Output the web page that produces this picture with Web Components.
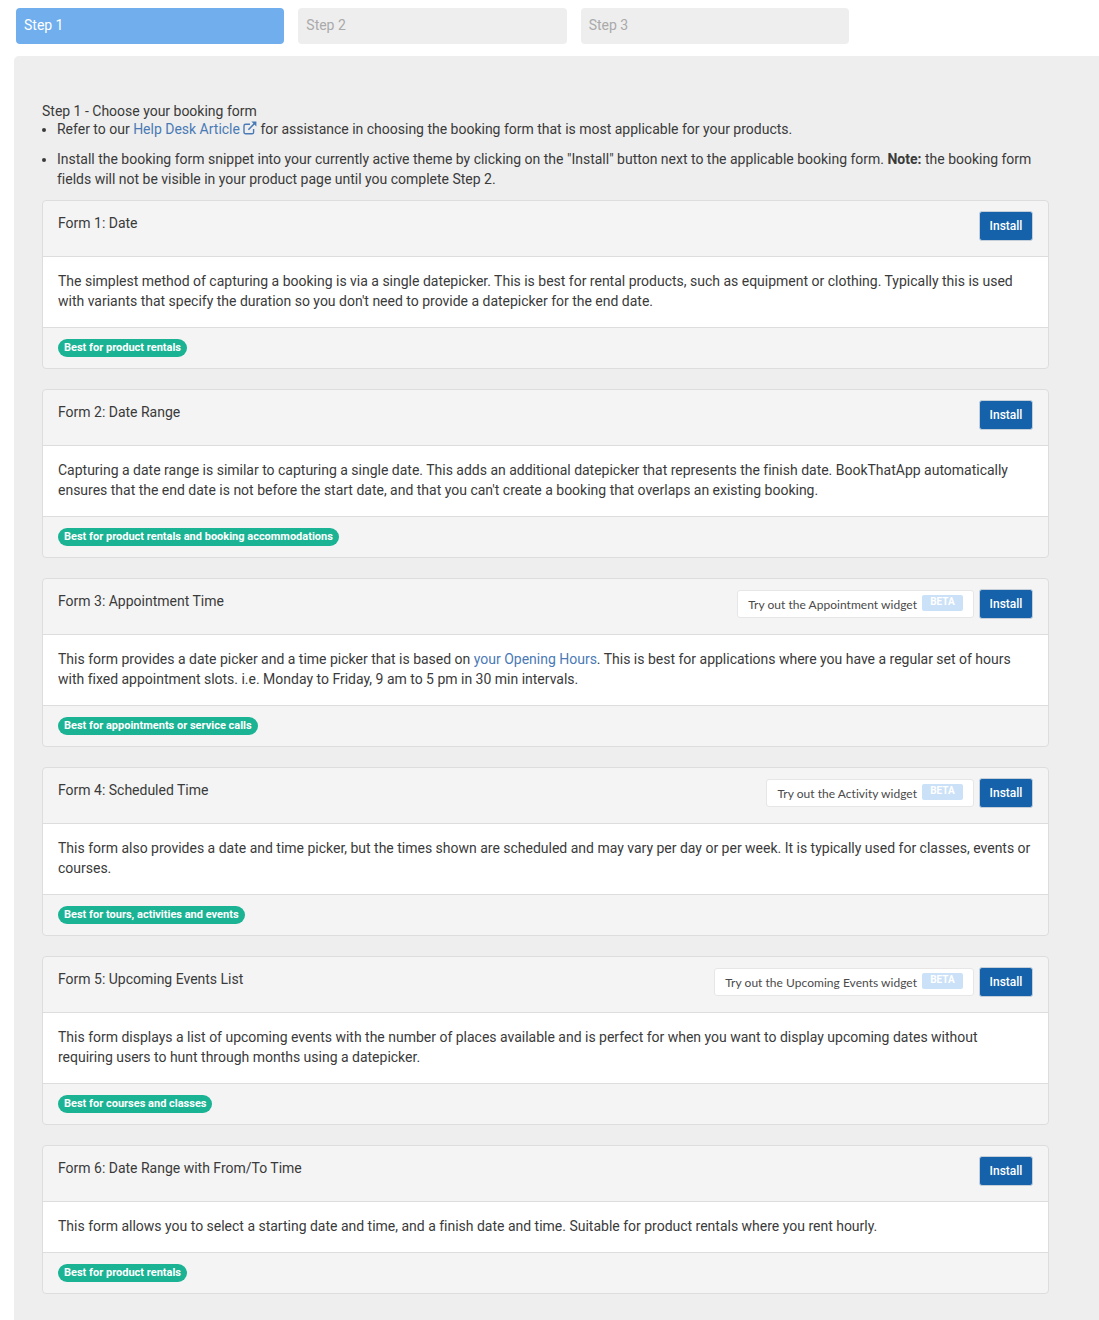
<!DOCTYPE html>
<html lang="en"><head><meta charset="utf-8"><title>Booking forms</title>
<style>
html,body{margin:0;padding:0;background:#fff;font-family:Roboto,"Liberation Sans",sans-serif;font-size:14px;line-height:20px;color:#3a3a3a;letter-spacing:-.007px}
body{height:1320px;overflow:hidden}
</style></head><body>
<wizard-steps><step-tab active>Step 1</step-tab><step-tab>Step 2</step-tab><step-tab>Step 3</step-tab></wizard-steps>
<step-panel>
<div slot="intro">Step 1 - Choose your booking form</div>
<info-list slot="intro">
<info-item>Refer to our <a style="color:#4a7ab5;text-decoration:none" href="#">Help Desk Article<ext-icon></ext-icon></a> for assistance in choosing the booking form that is most applicable for your products.</info-item>
<info-item>Install the booking form snippet into your currently active theme by clicking on the "Install" button next to the applicable booking form. <b>Note:</b> the booking form fields will not be visible in your product page until you complete Step 2.</info-item>
</info-list>
<form-card title="Form 1: Date" tag="Best for product rentals">The simplest method of capturing a booking is via a single datepicker. This is best for rental products, such as equipment or clothing. Typically this is used with variants that specify the duration so you don't need to provide a datepicker for the end date.</form-card>
<form-card title="Form 2: Date Range" tag="Best for product rentals and booking accommodations">Capturing a date range is similar to capturing a single date. This adds an additional datepicker that represents the finish date. BookThatApp automatically ensures that the end date is not before the start date, and that you can't create a booking that overlaps an existing booking.</form-card>
<form-card title="Form 3: Appointment Time" tag="Best for appointments or service calls" widget="Try out the Appointment widget">This form provides a date picker and a time picker that is based on <a style="color:#4a7ab5;text-decoration:none" href="#">your Opening Hours</a>. This is best for applications where you have a regular set of hours with fixed appointment slots. i.e. Monday to Friday, 9 am to 5 pm in 30 min intervals.</form-card>
<form-card title="Form 4: Scheduled Time" tag="Best for tours, activities and events" widget="Try out the Activity widget">This form also provides a date and time picker, but the times shown are scheduled and may vary per day or per week. It is typically used for classes, events or courses.</form-card>
<form-card title="Form 5: Upcoming Events List" tag="Best for courses and classes" widget="Try out the Upcoming Events widget">This form displays a list of upcoming events with the number of places available and is perfect for when you want to display upcoming dates without requiring users to hunt through months using a datepicker.</form-card>
<form-card title="Form 6: Date Range with From/To Time" tag="Best for product rentals" single>This form allows you to select a starting date and time, and a finish date and time. Suitable for product rentals where you rent hourly.</form-card>
</step-panel>
<script>
function def(name,html,init){customElements.define(name,class extends HTMLElement{connectedCallback(){if(this.shadowRoot)return;const r=this.attachShadow({mode:'open'});r.innerHTML=html;if(init)init(this,r);}});}
def('wizard-steps',`<style>:host{display:flex;gap:14px;padding:8px 0 12px 16px;width:833px}</style><slot></slot>`);
def('step-tab',`<style>:host{display:block;flex:1 1 0;height:36px;line-height:35px;padding:0 8px;border-radius:4px;background:#eee;color:#aaa;font-size:14px;box-sizing:border-box}
:host([active]){background:#70aeee;color:#fff}</style><slot></slot>`);
def('step-panel',`<style>:host{display:block;margin-left:14px;background:#eee;border-top-left-radius:5px;padding:45px 50px 40px 28px}
.cards{display:flex;flex-direction:column;gap:20px}
.intro{padding-bottom:1px}</style><div class="intro"><slot name="intro"></slot></div><div class="cards"><slot></slot></div>`);
def('info-list',`<style>:host{display:block;padding-left:15px;margin-top:-2px}</style><slot></slot>`);
def('info-item',`<style>:host{display:list-item;list-style:disc outside;margin-bottom:10px}</style><slot></slot>`);
def('ext-icon',`<style>:host{display:inline-block;width:14px;height:14px;margin:0 0 0 3px;vertical-align:-1px}svg{display:block}</style>
<svg viewBox="0 0 14 14" width="14" height="14" fill="none" stroke="#4a7ab5" stroke-width="1.4"><path d="M10.6 8v3.2c0 .9-.7 1.6-1.6 1.6H2.6c-.9 0-1.6-.7-1.6-1.6V4.9c0-.9.7-1.6 1.6-1.6H7"/><path d="M5.4 8.8 12.2 1.8" stroke-width="1.6"/><path d="M8.4 .6h5v5L8.4.6z" fill="#4a7ab5" stroke="none"/></svg>`);
def('form-card',`<style>:host{display:block;border:1px solid #ddd;border-radius:4px;background:#f4f4f4;overflow:hidden}
.head{display:flex;align-items:flex-start;height:56px;box-sizing:border-box;padding:10px 15px;border-bottom:1px solid #ddd}
.title{flex:1;padding-top:2px}
.widget{display:flex;align-items:center;height:28px;margin:1px 5px 0 0;box-sizing:border-box;padding:1px 10px 0;background:#fff;border:1px solid #e6e6e6;border-radius:3px;font:12px/1 Lato,sans-serif;letter-spacing:.03px;color:#4a4a4a}
.beta{display:inline-block;margin-left:5px;width:41px;height:16px;text-align:center;background:#cbe1f8;color:#fff;border-radius:2px;font:bold 10px/14px Roboto,sans-serif;position:relative;top:-2px}
button{height:30px;width:54px;padding:0;background:#1562ab;border:1px solid #c4cfda;border-radius:3px;color:#fff;font:500 12px Roboto,sans-serif}
.body{background:#fff;padding:14px 15px 16px;border-bottom:1px solid #ddd}
.foot{height:40px;box-sizing:border-box;padding:11px 15px}
.tag{display:inline-block;height:18px;line-height:17px;padding:0 6px;border-radius:9px;background:#1ab394;color:#fff;font-weight:700;font-size:11px;letter-spacing:0;vertical-align:top}
</style><div class="head"><div class="title"></div><div class="widget" hidden></div><button>Install</button></div><div class="body"><slot></slot></div><div class="foot"><span class="tag"></span></div>`,
(h,r)=>{r.querySelector('.title').textContent=h.getAttribute('title');h.removeAttribute('title');r.querySelector('.tag').textContent=h.getAttribute('tag');
const w=h.getAttribute('widget'),e=r.querySelector('.widget');if(w){e.textContent=w;const b=document.createElement('span');b.className='beta';b.textContent='BETA';e.appendChild(b);}else e.style.display='none';});
</script>
</body></html>
